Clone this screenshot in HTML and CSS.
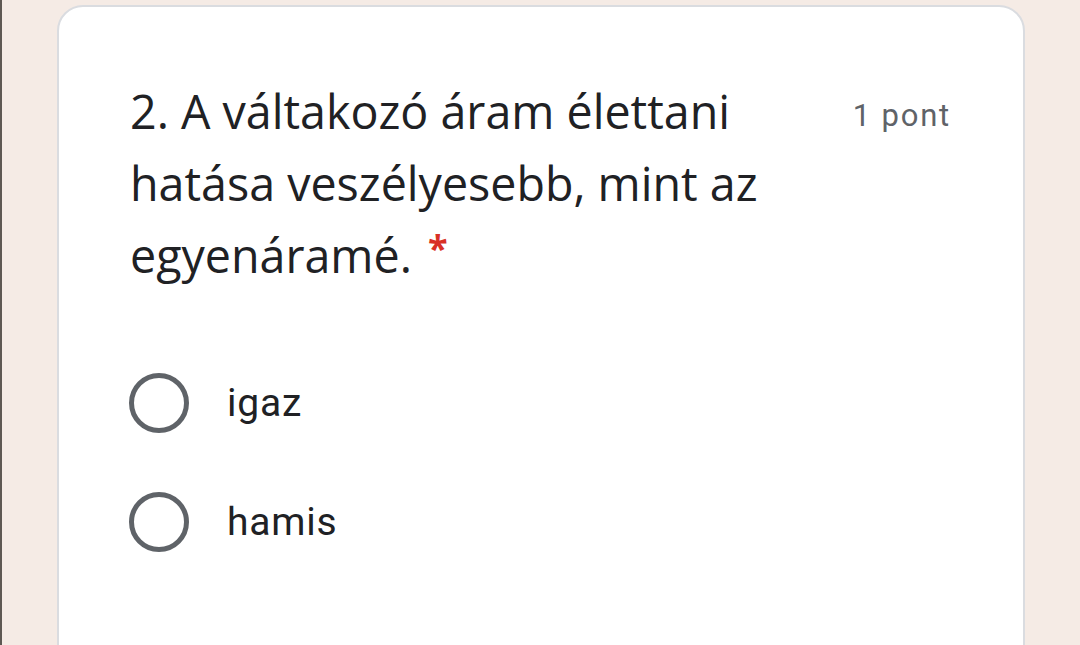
FILE: index.html
```html
<!DOCTYPE html>
<html lang="hu">
<head>
<meta charset="utf-8">
<link rel="stylesheet" href="styles.css">
</head>
<body>
<div class="page">
  <div class="card">
    <div class="header">
      <div class="title">2. A váltakozó áram élettani hatása veszélyesebb, mint az egyenáramé.<span class="req">*</span></div>
      <div class="points">1 pont</div>
    </div>
    <div class="options">
      <label class="option"><span class="radio"></span><span class="label">igaz</span></label>
      <label class="option"><span class="radio"></span><span class="label">hamis</span></label>
    </div>
  </div>
</div>
</body>
</html>
```
FILE: styles.css
```css
html, body {
  margin: 0;
  padding: 0;
  height: 100%;
  overflow: hidden;
}
body {
  background: #f5ebe5;
}
.page {
  height: 100%;
  border-left: 2px solid #5e5853;
  padding: 5px 0 0 55px;
  box-sizing: border-box;
  overflow: hidden;
}
.card {
  width: 968px;
  height: 700px;
  box-sizing: border-box;
  background: #fff;
  border: 2px solid #dadce0;
  border-radius: 26px;
  padding: 68px 72px 0 71px;
}
.header {
  display: flex;
  align-items: flex-start;
  gap: 30px;
}
.title {
  flex: 1;
  font-family: "Open Sans", sans-serif;
  font-size: 46.6px;
  line-height: 72px;
  color: #202124;
  max-width: 680px;
}
.req {
  display: inline-block;
  margin-left: 16px;
  color: #d93025;
  font-size: 36px;
  font-weight: 700;
  line-height: 1;
  vertical-align: 12px;
}
.points {
  margin-left: auto;
  margin-top: 5px;
  font-family: Roboto, sans-serif;
  font-size: 31px;
  letter-spacing: 1.8px;
  line-height: 72px;
  color: #5f6368;
}
.options {
  display: flex;
  flex-direction: column;
  gap: 59px;
  margin-top: 82px;
}
.option {
  display: flex;
  align-items: center;
  gap: 38px;
  height: 60px;
}
.radio {
  width: 60px;
  height: 60px;
  box-sizing: border-box;
  border: 5px solid #5f6368;
  border-radius: 50%;
  margin-left: -1px;
}
.label {
  font-family: Roboto, sans-serif;
  font-size: 39px;
  letter-spacing: 0.8px;
  color: #202124;
}
```
